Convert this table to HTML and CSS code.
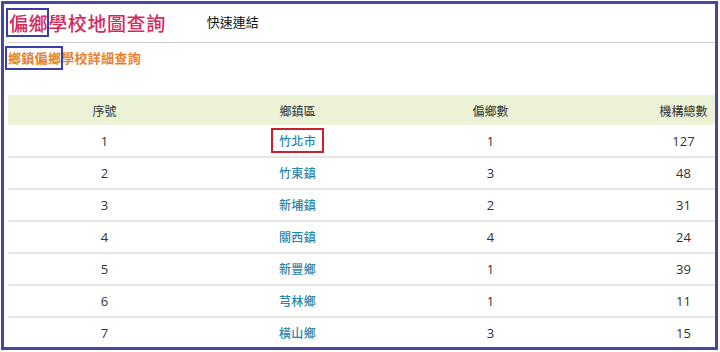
FILE: index.html
```html
<!DOCTYPE html>
<html lang="zh-Hant">
<head>
<meta charset="utf-8">
<title>偏鄉學校地圖查詢</title>
<link rel="stylesheet" href="styles.css">
</head>
<body>
<div class="frame">
  <header class="top">
    <h1 class="title"><span class="mark-blue">偏鄉</span>學校地圖查詢</h1>
    <a class="quick" href="#">快速連結</a>
  </header>
  <div class="rule"></div>
  <h2 class="sub"><span class="mark-blue small">鄉鎮偏鄉</span>學校詳細查詢</h2>
  <table class="grid">
    <thead>
      <tr><th>序號</th><th>鄉鎮區</th><th>偏鄉數</th><th>機構總數</th></tr>
    </thead>
    <tbody>
      <tr><td>1</td><td><a class="town mark-red" href="#">竹北市</a></td><td>1</td><td>127</td></tr>
      <tr><td>2</td><td><a class="town" href="#">竹東鎮</a></td><td>3</td><td>48</td></tr>
      <tr><td>3</td><td><a class="town" href="#">新埔鎮</a></td><td>2</td><td>31</td></tr>
      <tr><td>4</td><td><a class="town" href="#">關西鎮</a></td><td>4</td><td>24</td></tr>
      <tr><td>5</td><td><a class="town" href="#">新豐鄉</a></td><td>1</td><td>39</td></tr>
      <tr><td>6</td><td><a class="town" href="#">芎林鄉</a></td><td>1</td><td>11</td></tr>
      <tr><td>7</td><td><a class="town" href="#">橫山鄉</a></td><td>3</td><td>15</td></tr>
    </tbody>
  </table>
</div>
</body>
</html>
```
FILE: styles.css
```css
* { box-sizing: border-box; }
html, body { margin: 0; padding: 0; background: #fff; }
body { font-family: "Open Sans", "Noto Sans CJK TC", sans-serif; color: #333; }

.frame {
  margin: 1px;
  width: 717px;
  height: 349px;
  border: 3px solid #4646a6;
  padding-left: 4px;
  overflow: hidden;
  background: #fff;
}

.top {
  height: 38px;
  display: flex;
  align-items: center;
}
.title {
  margin: 0 0 0 1px;
  font-family: "Noto Sans CJK TC", sans-serif;
  font-weight: 500;
  font-size: 19px;
  letter-spacing: 0.6px;
  color: #d42a5c;
  line-height: 28px;
}
.quick {
  margin-left: 41px;
  margin-top: -4px;
  font-family: "Noto Sans CJK TC", sans-serif;
  font-size: 13px;
  color: #111;
  text-decoration: none;
}

.rule {
  border-top: 1px solid #cfcfcf;
}

.sub {
  margin: 0 0 23px 0;
  height: 29px;
  padding-left: 0;
  display: flex;
  align-items: center;
  font-family: "Noto Sans CJK TC", sans-serif;
  font-size: 13px;
  font-weight: 700;
  letter-spacing: 0.3px;
  color: #e8812c;
}

.mark-blue { position: relative; }
.mark-blue::after {
  content: "";
  position: absolute;
  left: -3px;
  right: -1px;
  top: -1px;
  bottom: -1px;
  border: 2px solid #3b3ea4;
}
.mark-blue.small::after {
  left: -3px;
  right: -2px;
  top: -2px;
  bottom: -3px;
}

.grid {
  width: 772px;
  border-collapse: collapse;
  table-layout: fixed;
  font-size: 13px;
}
.grid th {
  height: 30px;
  background: #ebf2d6;
  font-family: "Noto Sans CJK TC", sans-serif;
  font-weight: 400;
  font-size: 12px;
  color: #333;
  text-align: center;
  padding: 0;
}
.grid td {
  height: 32px;
  text-align: center;
  padding: 0;
  border-bottom: 2px solid #e6e6e6;
  color: #333;
}
.town {
  font-family: "Noto Sans CJK TC", sans-serif;
  font-size: 12px;
  font-weight: 500;
  letter-spacing: 0.4px;
  color: #2a86a8;
  text-decoration: none;
}
.mark-red {
  display: inline-block;
  padding: 2px 6px;
  border: 2px solid #c8202e;
  line-height: 17px;
}
```
